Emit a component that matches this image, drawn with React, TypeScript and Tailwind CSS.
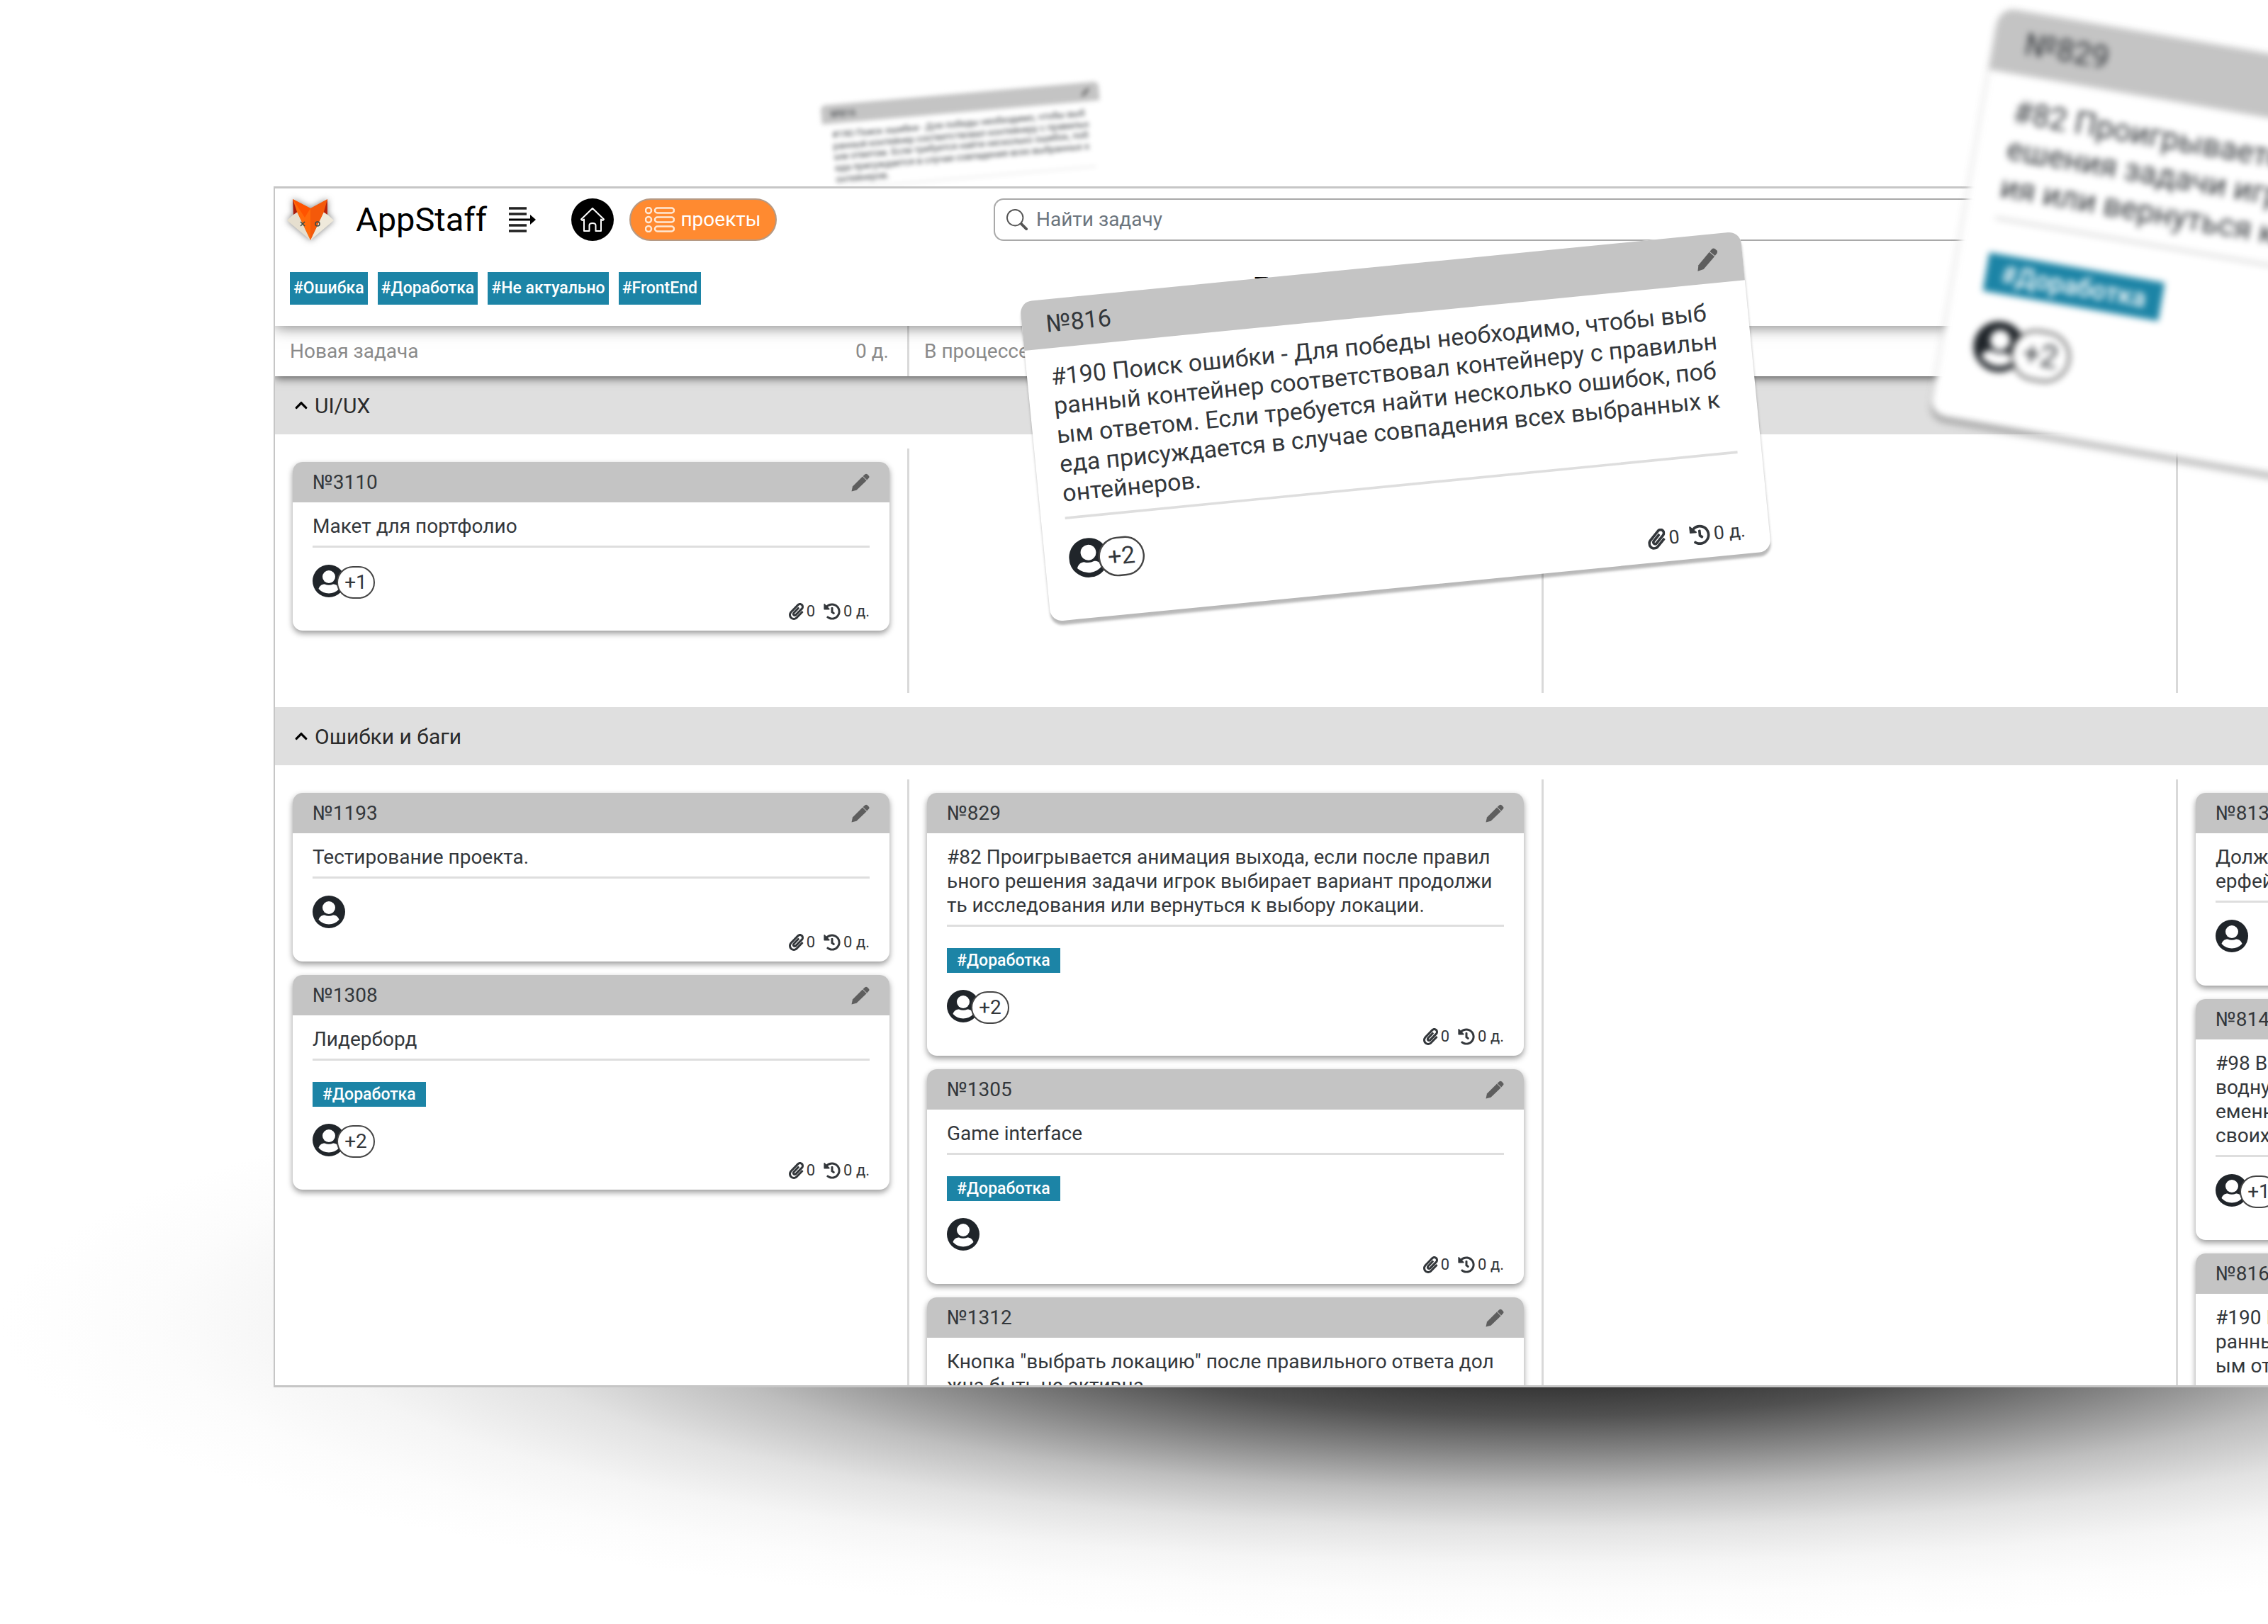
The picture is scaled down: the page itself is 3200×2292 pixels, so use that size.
import { FaChevronUp, FaHistory, FaPaperclip } from "react-icons/fa";
import { BsSearch } from "react-icons/bs";

type Task = {
  id: string;
  lines: string[];
  tag?: string;
  extra?: string;
};

const filters = ["#Ошибка", "#Доработка", "#Не актуально", "#FrontEnd"];

const statuses = [
  { name: "Новая задача", days: "0 д." },
  { name: "В процессе", days: "" },
  { name: "", days: "" },
  { name: "", days: "" },
];

const searchBug: Task = {
  id: "№816",
  lines: [
    "#190 Поиск ошибки - Для победы необходимо, чтобы выб",
    "ранный контейнер соответствовал контейнеру с правильн",
    "ым ответом. Если требуется найти несколько ошибок, поб",
    "еда присуждается в случае совпадения всех выбранных к",
    "онтейнеров.",
  ],
  extra: "+2",
};

const groups: { name: string; grow: boolean; columns: Task[][] }[] = [
  {
    name: "UI/UX",
    grow: false,
    columns: [[{ id: "№3110", lines: ["Макет для портфолио"], extra: "+1" }], [], [], []],
  },
  {
    name: "Ошибки и баги",
    grow: true,
    columns: [
      [
        { id: "№1193", lines: ["Тестирование проекта."] },
        { id: "№1308", lines: ["Лидерборд"], tag: "#Доработка", extra: "+2" },
      ],
      [
        {
          id: "№829",
          lines: [
            "#82 Проигрывается анимация выхода, если после правил",
            "ьного решения задачи игрок выбирает вариант продолжи",
            "ть исследования или вернуться к выбору локации.",
          ],
          tag: "#Доработка",
          extra: "+2",
        },
        { id: "№1305", lines: ["Game interface"], tag: "#Доработка" },
        {
          id: "№1312",
          lines: ['Кнопка "выбрать локацию" после правильного ответа дол', "жна быть не активна."],
        },
      ],
      [],
      [
        { id: "№813", lines: ["Должен", "ерфейс"] },
        { id: "№814", lines: ["#98 В", "водную", "еменн", "своих"], extra: "+1" },
        searchBug,
      ],
    ],
  },
];

const flying: Task = {
  id: "№829",
  lines: [
    "#82 Проигрывается анимация выхода",
    "ешения задачи игрок выбирает",
    "ия или вернуться к выбору локации.",
  ],
  tag: "#Доработка",
  extra: "+2",
};

const shadows = {
  none: "rounded-[14px] bg-white",
  resting: "rounded-[14px] bg-white shadow-[0_4px_8px_rgba(0,0,0,0.4)]",
  lifted: "rounded-[14px] bg-white shadow-[0_5px_3px_rgba(0,0,0,0.28)]",
};

function Pencil() {
  return (
    <svg viewBox="0 0 26 26" className="size-[26px] fill-[#5e5e5e]" aria-hidden="true">
      <path d="M0.5 25.5 2 18.5 16 4.6 21.6 10.2 7.5 23.8Z" />
      <path d="M16.6 4 19.6 1.2Q21.2 0 22.8 1.4L24.8 3.4Q26.2 5 24.9 6.6L22.2 9.6Z" />
    </svg>
  );
}

function Person() {
  return (
    <svg viewBox="0 0 46 46" className="size-[46px]" aria-hidden="true">
      <circle cx="23" cy="23" r="23" fill="#20252a" />
      <circle cx="23" cy="17" r="9" fill="#fff" />
      <path d="M8.5 34C10 29.5 13.5 27.5 17 27.5Q23 30 29 27.5C32.5 27.5 36 29.5 37.5 34Q31.5 40.5 23 40.5T8.5 34Z" fill="#fff" />
    </svg>
  );
}

function Fox() {
  return (
    <svg viewBox="0 0 66 58" className="h-[58px] w-[66px] overflow-visible drop-shadow-[0_0_5px_rgba(0,0,0,0.5)]" role="img" aria-label="AppStaff">
      <path d="M0 30 14 17 33 58Z" fill="#e6dfcf" />
      <path d="M66 30 52 17 33 58Z" fill="#efe9db" />
      <path d="M8 0 18 16 9 22Z" fill="#a81c0c" />
      <path d="M57 0 48 16 57 22Z" fill="#b5230e" />
      <path d="M8 0 33 13V58L14 18Z" fill="#ff6a0a" />
      <path d="M57 0 33 13V58L52 18Z" fill="#f4590a" />
      <path d="M8 0 33 13 25 26Z" fill="#ff5300" />
      <path d="M19 32 25 38M25 32 19 38" stroke="#3c4a45" strokeWidth="1.5" />
      <circle cx="43" cy="35" r="3" fill="none" stroke="#3c4a45" strokeWidth="1.5" />
    </svg>
  );
}

function Card({ task, elevation = "resting" }: { task: Task; elevation?: keyof typeof shadows }) {
  return (
    <article className={shadows[elevation]}>
      <header className="flex h-[57px] items-center justify-between rounded-t-[14px] bg-[#c4c4c4] px-7">
        <h3>{task.id}</h3>
        <button type="button" aria-label={`Изменить ${task.id}`}>
          <Pencil />
        </button>
      </header>
      <div className="px-7 pt-[17px] pb-[7px]">
        <p className="border-b-[3px] border-[#dedede] pb-[10px] leading-[34px] whitespace-nowrap">
          {task.lines.map((line) => (
            <span key={line} className="block">
              {line}
            </span>
          ))}
        </p>
        {task.tag && (
          <div className="flex pt-[30px]">
            <a href="#tag" className="bg-[#1c84a6] px-[14px] text-[23px] leading-[35px] font-medium text-white">
              {task.tag}
            </a>
          </div>
        )}
        <div className="mt-6 flex h-[46px] items-start">
          <Person />
          {task.extra && (
            <span className="mt-0.5 -ml-3 flex h-[46px] w-[54px] items-center justify-center rounded-full border-2 border-[#444] bg-white">
              {task.extra}
            </span>
          )}
        </div>
        <div className="flex h-10 items-center justify-end text-[22px] leading-10">
          <FaPaperclip className="mr-1 h-6 w-[21px]" />
          <span className="mr-3">0</span>
          <FaHistory className="mr-1 size-6" />
          <span>0 д.</span>
        </div>
      </div>
    </article>
  );
}

function MenuIcon() {
  return (
    <svg viewBox="0 0 38 36" className="h-9 w-[38px]" aria-hidden="true">
      <path d="M0 2H25M0 10H25M0 26H25M0 34H25" stroke="#222" strokeWidth="3.5" />
      <path d="M0 18H32" stroke="#000" strokeWidth="3" />
      <path d="M30 11 38 18 30 25Z" />
    </svg>
  );
}

function HomeIcon() {
  return (
    <svg viewBox="0 0 34 34" className="size-[34px]" fill="none" stroke="#fff" strokeWidth="2" strokeLinejoin="round" aria-hidden="true">
      <path d="M17 1 1 16.5 2.5 18 5 16.5V33H12.5V25Q12.5 22 17 22T21.5 25V33H29V16.5L31.5 18 33 16.5Z" />
    </svg>
  );
}

function ListIcon() {
  return (
    <svg viewBox="0 0 42 36" className="h-9 w-[42px]" fill="none" stroke="#ffe8d4" strokeWidth="2.5" aria-hidden="true">
      {[5, 18, 31].map((y) => (
        <g key={y}>
          <circle cx="5" cy={y} r="4" />
          <rect x="14" y={y - 3.5} width="27" height="7" rx="3.5" />
        </g>
      ))}
    </svg>
  );
}

export default function App() {
  return (
    <div className="relative flex h-screen flex-col overflow-hidden bg-white pt-[263px] pb-[334px] pl-[386px] font-['Roboto',sans-serif] text-[28px] text-[#33373b]">
      <div
        aria-hidden="true"
        className="absolute top-[1440px] left-0 h-[852px] w-[4360px] bg-[radial-gradient(closest-side,#2c2c2c_0%,#333_20%,#505050_31%,#848484_43%,#bebebe_56%,#e2e2e2_68%,#f5f5f5_80%,#fcfcfc_90%,#fff_100%)]"
      />

      <div className="absolute top-[203px] left-[1361px] w-[842px] -translate-x-1/2 -translate-y-[171px] scale-[0.467] -rotate-5 blur-[7px]">
        <Card task={searchBug} elevation="none" />
      </div>

      <main className="relative isolate min-h-0 flex-1 overflow-hidden border-t-[3px] border-b-[3px] border-l-2 border-[#c6c6c6] bg-white">
        <header className="relative z-20 bg-white pt-[14px] pb-[30px] pl-[21px] shadow-[0_2px_20px_rgba(0,0,0,0.5)]">
          <div className="flex h-[60px] items-center">
            <div className="-ml-1 flex items-center">
              <Fox />
              <h1 className="ml-[31px] text-[47px] leading-[60px] text-black">AppStaff</h1>
            </div>
            <button type="button" aria-label="Меню" className="ml-[31px]">
              <MenuIcon />
            </button>
            <a href="#home" aria-label="Главная" className="ml-[50px] flex size-[60px] items-center justify-center rounded-full bg-black">
              <HomeIcon />
            </a>
            <button type="button" className="ml-[22px] flex h-[60px] w-[208px] items-center justify-center gap-2 rounded-full border-2 border-[#b59a85] bg-[#ff8a30] text-white">
              <ListIcon />
              проекты
            </button>
            <label className="ml-[306px] flex h-[60px] flex-1 items-center gap-3 rounded-l-[14px] border-2 border-r-0 border-[#a9a9a9] bg-white pl-4">
              <BsSearch className="size-[30px] text-[#555]" />
              <input type="search" aria-label="Найти задачу" placeholder="Найти задачу" className="flex-1 outline-none placeholder:text-[#6c757d]" />
            </label>
          </div>
          <nav className="mt-11 flex h-[46px] gap-[14px]">
            {filters.map((tag) => (
              <a key={tag} href="#filter" className="bg-[#1c84a6] px-[5px] text-[23px] leading-[46px] font-medium text-white">
                {tag}
              </a>
            ))}
            <span className="ml-[764px] text-[42px] leading-[46px] text-black">Г</span>
          </nav>
        </header>

        <div className="relative z-10 grid grid-cols-[repeat(4,895px)] bg-white text-[#8a8a8a] shadow-[0_3px_12px_rgba(0,0,0,0.6)]">
          {statuses.map((status, i) => (
            <div key={i} className="flex h-[71px] items-center justify-between border-r-[3px] border-[#d9d9d9] pr-[26px] pl-[21px]">
              <h2>{status.name}</h2>
              <span>{status.days}</span>
            </div>
          ))}
        </div>

        {groups.map((group) => (
          <section key={group.name}>
            <h2 className="bg-[#dfdfdf] text-[30px] text-[#2a2a2a]">
              <button type="button" className="flex h-[82px] w-full items-center gap-[9px] pl-[27px]">
                <FaChevronUp className="size-5 text-black" />
                {group.name}
              </button>
            </h2>
            <div className={group.grow ? "grid min-h-[1000px] grid-cols-[repeat(4,895px)] py-5" : "grid grid-cols-[repeat(4,895px)] py-5"}>
              {group.columns.map((tasks, i) => (
                <div key={i} className={group.grow ? "flex flex-col gap-[19px] border-r-[3px] border-[#d9d9d9] px-[25px] pt-[19px]" : "border-r-[3px] border-[#d9d9d9] px-[25px] pt-[19px] pb-[88px]"}>
                  {tasks.map((task) => (
                    <Card key={task.id} task={task} />
                  ))}
                </div>
              ))}
            </div>
          </section>
        ))}
      </main>

      <div className="absolute top-[602px] left-[1969px] w-[842px] -translate-x-1/2 -translate-y-1/2 scale-[1.213] -rotate-[5.6deg]">
        <Card task={searchBug} elevation="lifted" />
      </div>

      <div className="absolute top-[10px] left-[2822px] w-[940px] origin-top-left scale-[1.57] rotate-[9.8deg] blur-[3px]">
        <Card task={flying} elevation="lifted" />
      </div>
    </div>
  );
}
